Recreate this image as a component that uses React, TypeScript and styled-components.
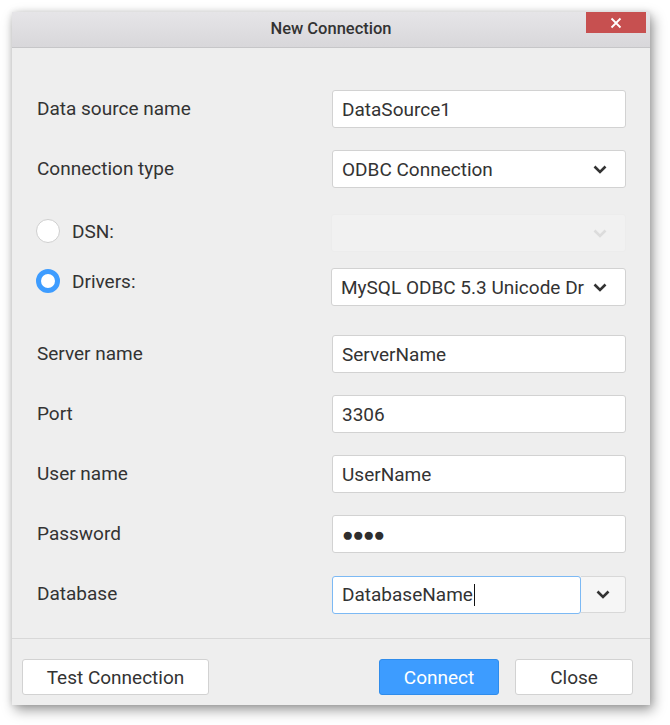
import React from "react";
import styled, { createGlobalStyle } from "styled-components";

const Global = createGlobalStyle`
  html, body { margin: 0; padding: 0; background: #ffffff; }
  body { font-family: Roboto, "Noto Sans", Arial, sans-serif; }
`;

const Page = styled.div`
  padding: 12px 20px 20px 12px;
`;

const Dialog = styled.div`
  width: 638px;
  height: 693px;
  background: #eeeeee;
  box-shadow: 3px 5px 12px rgba(0, 0, 0, 0.4), 0 0 6px rgba(0, 0, 0, 0.12);
  display: flex;
  flex-direction: column;
  box-sizing: border-box;
`;

const TitleBar = styled.div`
  height: 36px;
  flex: none;
  background: linear-gradient(#e6e5e8, #d8d7da);
  border-bottom: 1px solid #c6c6c8;
  box-sizing: border-box;
  display: flex;
  align-items: center;
  justify-content: center;
  position: relative;
`;

const Title = styled.div`
  font-size: 16.5px;
  font-weight: 500;
  color: #333333;
  margin-top: -3px;
`;

const CloseX = styled.div`
  position: absolute;
  top: 0;
  right: 4px;
  width: 60px;
  height: 21px;
  background: #c75050;
  display: flex;
  align-items: center;
  justify-content: center;
`;

const Body = styled.div`
  flex: 1;
  padding: 42px 24px 0 25px;
  display: flex;
  flex-direction: column;
`;

const Row = styled.div<{ $mt: number }>`
  display: flex;
  align-items: center;
  margin-top: ${(p) => p.$mt}px;
  height: 38px;
`;

const Label = styled.div`
  width: 295px;
  flex: none;
  font-size: 19px;
  color: #333333;
  margin-bottom: 2px;
`;

const RadioLabel = styled.label<{ $up: number }>`
  width: 295px;
  flex: none;
  display: flex;
  align-items: center;
  gap: 12px;
  font-size: 19px;
  color: #333333;
  margin-left: -1px;
  margin-bottom: ${(p) => p.$up * 2}px;
`;

const Radio = styled.span<{ $on?: boolean }>`
  width: 24px;
  height: 24px;
  border-radius: 50%;
  box-sizing: border-box;
  background: #ffffff;
  border: ${(p) => (p.$on ? "5px solid #3d9cff" : "1px solid #cfcfcf")};
`;

const Field = styled.div<{ $disabled?: boolean; $focus?: boolean }>`
  flex: 1;
  min-width: 0;
  height: 38px;
  box-sizing: border-box;
  background: ${(p) => (p.$disabled ? "#f1f1f1" : "#ffffff")};
  border: 1px solid
    ${(p) => (p.$disabled ? "#ececec" : p.$focus ? "#7cb9f4" : "#d2d2d2")};
  border-radius: 3px;
  display: flex;
  align-items: center;
  padding: 0 18px 0 9px;
  font-size: 19px;
  color: #333333;
  white-space: nowrap;
  overflow: hidden;
`;

const FieldText = styled.span`
  flex: 1;
  min-width: 0;
  overflow: hidden;
  margin-right: 8px;
`;

const Dots = styled.span`
  font-size: 19px;
  letter-spacing: -1px;
  color: #2e2e2e;
`;

const Caret = styled.span`
  display: inline-block;
  width: 1px;
  height: 22px;
  background: #111;
  vertical-align: middle;
  margin-left: 1px;
`;

const Combo = styled.div`
  flex: 1;
  display: flex;
  height: 37px;
`;

const ComboBtn = styled.div`
  width: 45px;
  flex: none;
  box-sizing: border-box;
  border: 1px solid #d8d8d8;
  border-left: none;
  border-radius: 0 3px 3px 0;
  background: #f6f6f6;
  display: flex;
  align-items: center;
  justify-content: center;
`;

const Separator = styled.div`
  height: 1px;
  background: #d8d8d8;
  flex: none;
`;

const Footer = styled.div`
  height: 66px;
  flex: none;
  box-sizing: border-box;
  padding: 20px 17px 10px 10px;
  display: flex;
  align-items: flex-start;
`;

const Button = styled.button<{ $primary?: boolean; $w: number }>`
  width: ${(p) => p.$w}px;
  height: 36px;
  box-sizing: border-box;
  border-radius: 3px;
  border: 1px solid ${(p) => (p.$primary ? "#2f8ceb" : "#d2d2d2")};
  background: ${(p) => (p.$primary ? "#3d9cff" : "#ffffff")};
  color: ${(p) => (p.$primary ? "#ffffff" : "#333333")};
  font-family: Roboto, Arial, sans-serif;
  font-size: 19px;
  padding: 0;
`;

const Spacer = styled.div`
  flex: 1;
`;

const Gap = styled.div`
  width: 16px;
  flex: none;
`;

const Chevron = ({ color = "#333333" }: { color?: string }) => (
  <svg width="14" height="9" viewBox="0 0 14 9" style={{ flex: "none" }}>
    <path d="M1.5 1.5 L7 7 L12.5 1.5" fill="none" stroke={color} strokeWidth="2.6" />
  </svg>
);

export default function App() {
  return (
    <Page>
      <Global />
      <Dialog>
        <TitleBar>
          <Title>New Connection</Title>
          <CloseX>
            <svg width="12" height="12" viewBox="0 0 12 12">
              <path d="M1.5 1.5 L10.5 10.5 M10.5 1.5 L1.5 10.5" stroke="#ffffff" strokeWidth="1.8" />
            </svg>
          </CloseX>
        </TitleBar>
        <Body>
          <Row $mt={0}>
            <Label>Data source name</Label>
            <Field>
              <FieldText>DataSource1</FieldText>
            </Field>
          </Row>
          <Row $mt={22}>
            <Label>Connection type</Label>
            <Field>
              <FieldText>ODBC Connection</FieldText>
              <Chevron />
            </Field>
          </Row>
          <Row $mt={26}>
            <RadioLabel $up={2}>
              <Radio />
              DSN:
            </RadioLabel>
            <Field $disabled>
              <FieldText />
              <Chevron color="#dcdcdc" />
            </Field>
          </Row>
          <Row $mt={16}>
            <RadioLabel $up={6}>
              <Radio $on />
              Drivers:
            </RadioLabel>
            <Field>
              <FieldText>MySQL ODBC 5.3 Unicode Driver</FieldText>
              <Chevron />
            </Field>
          </Row>
          <Row $mt={29}>
            <Label>Server name</Label>
            <Field>
              <FieldText>ServerName</FieldText>
            </Field>
          </Row>
          <Row $mt={22}>
            <Label>Port</Label>
            <Field>
              <FieldText>3306</FieldText>
            </Field>
          </Row>
          <Row $mt={22}>
            <Label>User name</Label>
            <Field>
              <FieldText>UserName</FieldText>
            </Field>
          </Row>
          <Row $mt={22}>
            <Label>Password</Label>
            <Field>
              <Dots>●●●●</Dots>
            </Field>
          </Row>
          <Row $mt={22}>
            <Label>Database</Label>
            <Combo>
              <Field $focus>
                <FieldText>
                  DatabaseName<Caret />
                </FieldText>
              </Field>
              <ComboBtn>
                <Chevron />
              </ComboBtn>
            </Combo>
          </Row>
        </Body>
        <Separator />
        <Footer>
          <Button $w={187}>Test Connection</Button>
          <Spacer />
          <Button $primary $w={120}>Connect</Button>
          <Gap />
          <Button $w={118}>Close</Button>
        </Footer>
      </Dialog>
    </Page>
  );
}
